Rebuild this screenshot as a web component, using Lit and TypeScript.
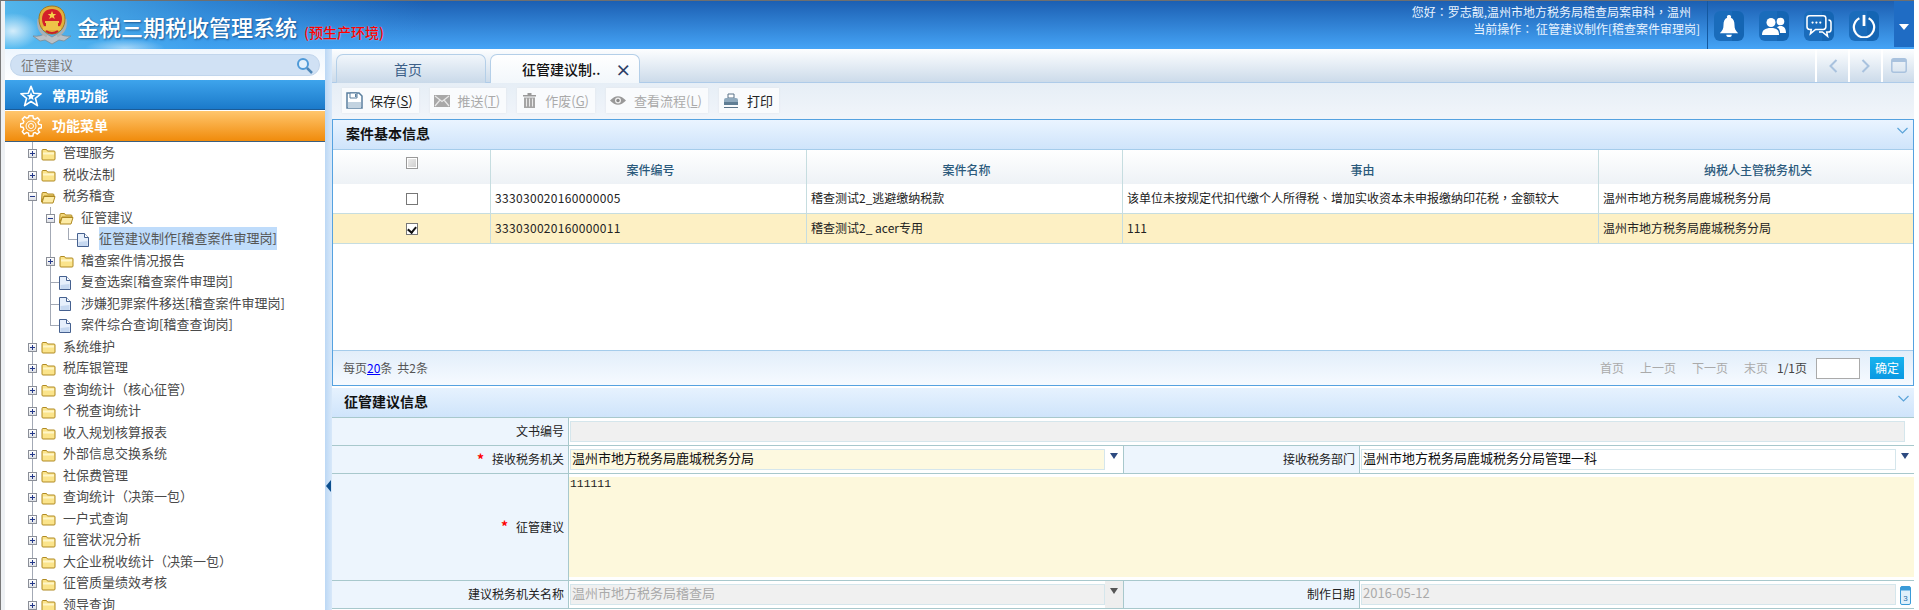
import { LitElement, html, css, svg } from 'lit';
import { customElement } from 'lit/decorators.js';

type Node = { label: string; level: number; kind: 'closed' | 'open' | 'leaf'; last?: boolean; active?: boolean };

const TREE: Node[] = [
	{ label: '管理服务', level: 0, kind: 'closed' },
	{ label: '税收法制', level: 0, kind: 'closed' },
	{ label: '税务稽查', level: 0, kind: 'open' },
	{ label: '征管建议', level: 1, kind: 'open' },
	{ label: '征管建议制作[稽查案件审理岗]', level: 2, kind: 'leaf', last: true, active: true },
	{ label: '稽查案件情况报告', level: 1, kind: 'closed' },
	{ label: '复查选案[稽查案件审理岗]', level: 1, kind: 'leaf' },
	{ label: '涉嫌犯罪案件移送[稽查案件审理岗]', level: 1, kind: 'leaf' },
	{ label: '案件综合查询[稽查查询岗]', level: 1, kind: 'leaf', last: true },
	{ label: '系统维护', level: 0, kind: 'closed' },
	{ label: '税库银管理', level: 0, kind: 'closed' },
	{ label: '查询统计（核心征管）', level: 0, kind: 'closed' },
	{ label: '个税查询统计', level: 0, kind: 'closed' },
	{ label: '收入规划核算报表', level: 0, kind: 'closed' },
	{ label: '外部信息交换系统', level: 0, kind: 'closed' },
	{ label: '社保费管理', level: 0, kind: 'closed' },
	{ label: '查询统计（决策一包）', level: 0, kind: 'closed' },
	{ label: '一户式查询', level: 0, kind: 'closed' },
	{ label: '征管状况分析', level: 0, kind: 'closed' },
	{ label: '大企业税收统计（决策一包）', level: 0, kind: 'closed' },
	{ label: '征管质量绩效考核', level: 0, kind: 'closed' },
	{ label: '领导查询', level: 0, kind: 'closed' },
];

const folderClosed = svg`<svg width="15" height="14" viewBox="0 0 15 14"><path d="M1 3.500q0-1 1-1h3.500l1 1.500h6.500q1 0 1 1v7q0 1-1 1h-11q-1 0-1-1z" fill="#fbe48b" stroke="#b08a22"/><path d="M2 5.500h11v2h-11z" fill="#fff6c8"/></svg>`;
const folderOpen = svg`<svg width="15" height="14" viewBox="0 0 15 14"><path d="M1 3.500q0-1 1-1h3.500l1 1.500h5.500q1 0 1 1v1h-10l-2.500 6z" fill="#f3d77a" stroke="#b08a22"/><path d="M3 6.500h11l-2 6.500h-11z" fill="#fdeca6" stroke="#b08a22"/></svg>`;
const fileIcon = svg`<svg width="12" height="14" viewBox="0 0 12 14"><path d="M.5.500h7l4 4v9h-11z" fill="#e6effb" stroke="#45608f"/><path d="M7.500.5v4h4" fill="#fff" stroke="#45608f"/><path d="M1.500 9l9-1v5h-9z" fill="#c6d8f0"/></svg>`;

@customElement('nav-tree')
export class NavTree extends LitElement {
	static styles = css`
		:host {
			display: block;
			padding-left: 18px;
			font: 13px/20px "Noto Sans CJK TC", "Noto Sans CJK SC", sans-serif;
			color: #4a4a4a;
		}
		.row {
			display: flex;
			height: 21.5px;
			white-space: nowrap;
		}
		.cell {
			width: 18px;
			flex: none;
			position: relative;
		}
		.guide::before {
			content: '';
			position: absolute;
			left: 9px;
			top: 0;
			bottom: 0;
			border-left: 1px solid #a3a9b5;
		}
		.elbow::before {
			content: '';
			position: absolute;
			left: 9px;
			top: 0;
			height: 11px;
			width: 9px;
			border-left: 1px solid #a3a9b5;
			border-bottom: 1px solid #a3a9b5;
		}
		.tee::before {
			content: '';
			position: absolute;
			left: 9px;
			top: 0;
			bottom: 0;
			border-left: 1px solid #a3a9b5;
		}
		.tee::after {
			content: '';
			position: absolute;
			left: 9px;
			top: 11px;
			width: 9px;
			border-top: 1px solid #a3a9b5;
		}
		.box {
			position: absolute;
			left: 5px;
			top: 7px;
			width: 7px;
			height: 7px;
			border: 1px solid #8b8f98;
			background: linear-gradient(#fff, #dde0e6);
		}
		.box::before {
			content: '';
			position: absolute;
			left: 1px;
			right: 1px;
			top: 3px;
			border-top: 1px solid #24398a;
		}
		.box.plus::after {
			content: '';
			position: absolute;
			top: 1px;
			bottom: 1px;
			left: 3px;
			border-left: 1px solid #24398a;
		}
		.icon {
			display: flex;
			align-items: center;
			padding-top: 2px;
			box-sizing: border-box;
			height: 21.5px;
		}
		.label {
			margin-left: 4px;
		}
		.active {
			background: #bfdcfb;
			height: 23px;
			line-height: 22px;
			margin-top: -1px;
			color: #555;
		}
	`;

	render() {
		return TREE.map(
			(n) => html`
				<div class="row">
					${n.level > 0 ? html`<span class="cell guide"></span>` : ''}
					${n.level > 1 ? html`<span class="cell guide"></span>` : ''}
					${n.kind === 'leaf'
						? html`<span class="cell ${n.last ? 'elbow' : 'tee'}"></span>`
						: html`<span class="cell guide"><i class="box ${n.kind === 'closed' ? 'plus' : ''}"></i></span>`}
					<span class="cell icon">
						${n.kind === 'leaf' ? fileIcon : n.kind === 'open' ? folderOpen : folderClosed}
					</span>
					<span class="label ${n.active ? 'active' : ''}">${n.label}</span>
				</div>
			`
		);
	}
}

const emblem = svg`<svg width="40" height="40" viewBox="0 0 40 40">
	<path d="M1 31q8 1 12-3l7 4 7-4q4 4 12 3l-7 5-5-1-7 4-7-4-5 1z" fill="#b9c0c6" stroke="#7d858b" stroke-width=".7"/>
	<path d="M7 14q-2 12 8 17M33 14q2 12-8 17" fill="none" stroke="#a9b0b6" stroke-width="3"/>
	<path d="M20 1c8 0 13 5 13 13s-5 15-13 15-13-7-13-15 5-13 13-13z" fill="#e2b13c" stroke="#a4771d"/>
	<path d="M20 4c6 0 10 4 10 10 0 3-1 5-2 7H12c-1-2-2-4-2-7 0-6 4-10 10-10z" fill="#d3202a"/>
	<path d="M20 6l1.200 3h3l-2.400 2 1 3-2.800-1.800L17.200 14l1-3-2.400-2h3z" fill="#f6d24a"/>
	<path d="M13 16h14v2H13zM14 18h12v4H14zM11 22h18v3H11z" fill="#eec348"/>
	<path d="M14 26q6 4 12 0" fill="none" stroke="#c6202a" stroke-width="2"/>
</svg>`;
const bell = svg`<svg width="22" height="24" viewBox="0 0 24 26"><path d="M12 1a2 2 0 0 1 2 3c3 1 4 4 4 8 0 4 1 6 4 9H2c3-3 4-5 4-9 0-4 1-7 4-8a2 2 0 0 1 2-3z" fill="#fff"/><path d="M9 22.500h6a3 2.500 0 0 1-6 0z" fill="#fff"/></svg>`;
const users = svg`<svg width="24" height="18" viewBox="0 0 24 18"><circle cx="9" cy="5.500" r="4.500" fill="#fff"/><circle cx="18.500" cy="4.500" r="3.800" fill="#fff"/><path d="M0 18c0-5 3-7 9-7s8 2 8 7z" fill="#fff"/><path d="M16 9.500c5-1.500 8 1 8 6.500h-6c0-3-1-5-3-5.500z" fill="#fff"/></svg>`;
const chat = svg`<svg width="26" height="24" viewBox="0 0 30 28" fill="none" stroke="#fff" stroke-width="1.800"><path d="M4 2h16q3 0 3 3v10q0 3-3 3H11l-6 5 1-5H4q-3 0-3-3V5q0-3 3-3z"/><path d="M26 7q3 0 3 3v8q0 3-3 3h-2l1 5-6-5h-4"/><g fill="#fff" stroke="none"><circle cx="7.500" cy="10" r="1.300"/><circle cx="12" cy="10" r="1.300"/><circle cx="16.500" cy="10" r="1.300"/></g></svg>`;
const power = svg`<svg width="24" height="24" viewBox="0 0 26 26" fill="none" stroke="#fff" stroke-width="2.400"><path d="M8 4.500a11 11 0 1 0 10 0"/><path d="M13 1v12" stroke-width="3"/></svg>`;
const star = svg`<svg width="22" height="22" viewBox="0 0 24 24"><path d="M12 1.500l3 7.500 8 .5-6.200 5 2.200 8-7-4.500L5 22.500l2.200-8L1 9.500 9 9z" fill="none" stroke="#fff" stroke-width="1.800" stroke-linejoin="round"/><path d="M12 8l1.300 3 3.200.2-2.500 2 .9 3.200-2.900-1.800-2.900 1.800.9-3.200-2.500-2 3.200-.2z" fill="#fff"/></svg>`;
const gear = svg`<svg width="22" height="22" viewBox="0 0 22 22" fill="none" stroke="#fff"><path stroke-width="1.500" d="M9 1h4l.6 2.800 1.900.8L18 3l2 2.500-1.600 2.400.7 1.900L22 10.500v3l-2.900.7-.7 1.900L20 18l-2.500 2-2-1.600-1.900.7L13 22H9l-.6-2.900-1.900-.7L4 20l-2-2.500 1.600-2.400-.7-1.900L0 12.500v-3l2.900-.7.700-1.900L2 4.500 4.500 2 6.500 3.600l1.900-.8z" transform="scale(.96) translate(.4 -.2)"/><circle cx="11" cy="11" r="5" stroke-width="1"/><circle cx="11" cy="11" r="2.500" stroke-width="1"/></svg>`;
const search = svg`<svg width="17" height="17" viewBox="0 0 17 17"><circle cx="7" cy="7" r="5" fill="#e3f0fb" stroke="#4f9ad8" stroke-width="2"/><path d="M11 11l5 5" stroke="#4f87b8" stroke-width="2.500"/></svg>`;
const saveIcon = svg`<svg width="17" height="17" viewBox="0 0 17 17"><path d="M1 1h12l3 3v12H1z" fill="#fff" stroke="#5a7f9e" stroke-width="1.500"/><path d="M4 1h7v5H4z" fill="#fff" stroke="#5a7f9e"/><path d="M9 2h1.500v3H9z" fill="#5a7f9e"/><path d="M2 10h13v6H2z" fill="#c3d3e0"/></svg>`;
const mailIcon = svg`<svg width="16" height="12" viewBox="0 0 16 12"><path d="M0 0h16v12H0z" fill="#a8a8a8"/><path d="M1 1l7 5.500L15 1M1 11l5-6M15 11l-5-6" fill="none" stroke="#e8e8e8" stroke-width="1.200"/></svg>`;
const trashIcon = svg`<svg width="13" height="15" viewBox="0 0 13 15"><path d="M0 2h13v1.500H0zM4.500 0h4v2h-4z" fill="#999"/><path d="M1 4.500h11V15H1z" fill="#a5a5a5"/><path d="M3.500 5.500v8M6.500 5.500v8M9.500 5.500v8" stroke="#e8e8e8"/></svg>`;
const eyeIcon = svg`<svg width="16" height="11" viewBox="0 0 16 11"><path d="M0 5.500Q8-3 16 5.500 8 14 0 5.500z" fill="#999"/><circle cx="8" cy="5.500" r="3" fill="#eee"/><circle cx="8" cy="5.500" r="1.700" fill="#888"/></svg>`;
const printIcon = svg`<svg width="16" height="16" viewBox="0 0 16 16"><path d="M5 1h6v4H5z" fill="#fff" stroke="#5a7388"/><path d="M1 7q0-2 2-2h10q2 0 2 2v5H1z" fill="#8fa9bd"/><path d="M1 9h14v3H1z" fill="#5f7d94"/><path d="M1 14.500h14" stroke="#5a7388"/></svg>`;
const calendar = svg`<svg width="11" height="20" viewBox="0 0 11 20"><rect x=".5" y="1.500" width="10" height="18" rx="1.500" fill="#dff0fb" stroke="#3a9bd8"/><path d="M1 1.500h9v4H1z" fill="#3a9bd8"/><text x="5.500" y="16" font-size="8" text-anchor="middle" fill="#2a6ea8" font-family="Liberation Sans">3</text></svg>`;
const chevron = svg`<svg class="fold" width="11" height="7" viewBox="0 0 11 7"><path d="M.5 1l5 5 5-5" fill="none" stroke="#5aa3d8" stroke-width="1.200"/></svg>`;

const ROWS = [
	{ no: '333030020160000005', name: '稽查测试2_逃避缴纳税款', why: '该单位未按规定代扣代缴个人所得税、增加实收资本未申报缴纳印花税，金额较大', org: '温州市地方税务局鹿城税务分局', on: false },
	{ no: '333030020160000011', name: '稽查测试2_ acer专用', why: '111', org: '温州市地方税务局鹿城税务分局', on: true },
];

const BUTTONS = [
	{ icon: saveIcon, text: '保存', key: 'S', off: false },
	{ icon: mailIcon, text: '推送', key: 'T', off: true },
	{ icon: trashIcon, text: '作废', key: 'G', off: true },
	{ icon: eyeIcon, text: '查看流程', key: 'L', off: true },
	{ icon: printIcon, text: '打印', key: '', off: false },
];

@customElement('app-root')
export class AppRoot extends LitElement {
	static styles = css`
		:host {
			display: block;
			width: 1919px;
			height: 610px;
			overflow: hidden;
			background: #fff;
			font: 12px/1.4 "Noto Sans CJK SC", sans-serif;
			color: #222;
		}
		.frame {
			width: 1914px;
			height: 610px;
			box-sizing: border-box;
			border-top: 1px solid #6f6f6f;
			border-left: 1px solid #7a7a7a;
			padding-left: 4px;
			background: #eef1f4;
			display: flex;
			flex-direction: column;
			overflow: hidden;
		}
		header {
			height: 48px;
			flex: none;
			display: flex;
			align-items: stretch;
			color: #fff;
			background:
				radial-gradient(ellipse 26px 18px at 8px 30px, rgba(255, 255, 255, .75), transparent),
				radial-gradient(ellipse 40px 9px at 120px 47px, rgba(255, 255, 255, .5), transparent),
				linear-gradient(90deg, rgba(88, 190, 240, .9), rgba(60, 160, 235, .55) 200px, rgba(30, 110, 200, 0) 420px),
				linear-gradient(#1c5fb2, #45a4f6);
		}
		.brand {
			display: flex;
			align-items: center;
			padding-left: 27px;
			flex: 1;
		}
		.brand h1 {
			margin: 1px 0 0 5px;
			font-size: 22px;
			font-weight: 500;
			line-height: 46px;
			text-shadow: 1px 1px 2px rgba(0, 40, 90, .6);
		}
		.brand em {
			margin: 16px 0 0 7px;
			font-style: normal;
			font-size: 14px;
			font-weight: 500;
			color: #f00;
			text-shadow: 0 0 2px rgba(255, 255, 255, .4);
		}
		.who {
			font-family: "Noto Sans CJK TC", "Noto Sans CJK SC", sans-serif;
			text-align: right;
			line-height: 17px;
			padding: 2px 7px 0 0;
			color: #e8f3ff;
		}
		.who div:first-child {
			margin-right: 9px;
		}
		.tools {
			display: flex;
			gap: 15px;
			border-left: 1px solid #14589f;
			padding: 10px 0 0 6px;
		}
		.tile {
			width: 30px;
			height: 30px;
			border-radius: 6px;
			background: linear-gradient(90deg, #1a6cbb 60%, #1465b3 60%);
			display: flex;
			align-items: center;
			justify-content: center;
		}
		.menu {
			margin-left: 15px;
			width: 20px;
			height: 46px;
			background: #1f6cc4;
			display: flex;
			align-items: center;
			justify-content: center;
		}
		.menu i {
			border: 5px solid transparent;
			border-top: 6px solid #fff;
			border-bottom: 0;
			margin-top: 6px;
		}
		.main {
			flex: 1;
			display: flex;
			min-height: 0;
		}
		aside {
			width: 320px;
			flex: none;
			background: #fff;
			overflow: hidden;
		}
		.find {
			height: 31px;
			box-sizing: border-box;
			padding: 5px 5px 0;
			background: linear-gradient(#eef6fe, #fff);
		}
		.find div {
			height: 22px;
			box-sizing: border-box;
			border: 1px solid #c2d6ec;
			border-radius: 11px;
			background: #d0e1f4;
			display: flex;
			align-items: center;
			justify-content: space-between;
			padding: 0 6px 0 10px;
			font-size: 13px;
			color: #777;
		}
		.bar {
			height: 30px;
			display: flex;
			align-items: center;
			gap: 10px;
			padding-left: 15px;
			box-sizing: border-box;
			font-size: 14px;
			font-weight: 700;
			color: #fff;
		}
		.bar.blue {
			background: linear-gradient(#3ea4ec, #1b7aca);
			border-bottom: 1px solid #1b5c98;
			margin-bottom: 1px;
			padding-top: 2px;
		}
		.bar.orange {
			background: linear-gradient(#ffc66d, #f08b0b);
			border-bottom: 1px solid #3a5f80;
			height: 31px;
		}
		.split {
			width: 7px;
			flex: none;
			background: linear-gradient(90deg, #bcd8f5, #d8e8f9);
			padding-top: 431px;
			box-sizing: border-box;
		}
		.split i {
			display: block;
			width: 0;
			border: 6px solid transparent;
			border-right: 5px solid #0d4f8e;
			border-left: 0;
			margin-left: 1px;
		}
		.work {
			width: 1582px;
			flex: none;
			display: flex;
			flex-direction: column;
			background: #fff;
		}
		.tabs {
			height: 34px;
			flex: none;
			box-sizing: border-box;
			display: flex;
			align-items: flex-end;
			gap: 4px;
			padding-left: 4px;
			background: linear-gradient(#fdfeff, #ccdbea);
			border-bottom: 1px solid #aecbe9;
		}
		.tab {
			width: 150px;
			height: 29px;
			box-sizing: border-box;
			margin-bottom: -1px;
			padding-right: 6px;
			border: 1px solid #b4cfe8;
			border-bottom: 0;
			border-radius: 7px 7px 0 0;
			background: linear-gradient(#f1f6fb, #c9d9e9);
			font-size: 14px;
			line-height: 28px;
			text-align: center;
			color: #3c5f88;
		}
		.tab.on {
			background: linear-gradient(#fff, #f2f7fb);
			color: #111;
			font-weight: 500;
			display: flex;
			padding: 0 0 0 31px;
			gap: 15px;
		}
		.tab.on b {
			font-size: 16px;
			color: #2d3f66;
		}
		.pager-nav {
			margin-left: auto;
			display: flex;
			height: 33px;
		}
		.pager-nav span {
			width: 31px;
			border-left: 2px solid #fff;
			display: flex;
			align-items: center;
			justify-content: center;
		}
		.toolbar {
			height: 36px;
			flex: none;
			box-sizing: border-box;
			display: flex;
			gap: 11px;
			padding: 5px 0 0 10px;
			background: linear-gradient(#e6eef6, #f1f5fa);
		}
		.btn {
			height: 25px;
			display: flex;
			align-items: center;
			gap: 6px;
			padding: 0 6px 0 2px;
			background: #f9fbfd;
			box-shadow: 0 0 2px #dfe4e9;
			font-size: 13px;
			line-height: 25px;
			color: #222;
		}
		.btn.off {
			color: #aaa;
		}
		.btn .ico {
			width: 20px;
			display: flex;
			justify-content: center;
		}
		.panel {
			height: 267px;
			flex: none;
			box-sizing: border-box;
			border: 1px solid #55a2e0;
			display: flex;
			flex-direction: column;
			margin-bottom: 2px;
		}
		.head {
			height: 30px;
			flex: none;
			box-sizing: border-box;
			display: flex;
			align-items: center;
			justify-content: space-between;
			padding: 0 5px 2px 13px;
			font-size: 14px;
			font-weight: 700;
			color: #111;
			background: linear-gradient(#eaf4ff, #cfe4fb);
			border-bottom: 1px solid #a5cceb;
		}
		.fold {
			margin-top: -6px;
		}
		.grid {
			display: grid;
			grid-template-columns: 157px 316px 316px 476px 1fr;
		}
		.grid > div {
			border-left: 1px solid #c6dde0;
			padding-left: 4px;
			display: flex;
			align-items: center;
			white-space: nowrap;
			overflow: hidden;
		}
		.grid > div:first-child {
			border-left: 0;
			padding: 0;
			justify-content: center;
		}
		.grid.top {
			height: 34px;
			background: linear-gradient(#fff, #eef2f6);
			font-weight: 500;
			color: #2b5a7c;
		}
		.grid.top > div {
			justify-content: center;
			padding-top: 6px;
		}
		.grid.top > div:first-child {
			align-items: flex-start;
			padding-top: 7px;
		}
		.grid.row {
			height: 30px;
			box-sizing: border-box;
			border-bottom: 1px solid #c6dde0;
			color: #222;
		}
		.grid.row.on {
			background: #fdf0c4;
		}
		.num {
			letter-spacing: .32px;
		}
		.why {
			font-family: "Noto Sans CJK TC", "Noto Sans CJK SC", sans-serif;
		}
		.check {
			width: 12px;
			height: 12px;
			box-sizing: border-box;
			border: 1px solid #777;
			background: #fff;
			display: block;
			position: relative;
		}
		.check.all {
			border-color: #999;
			background: linear-gradient(135deg, #eee, #ccc);
			box-shadow: inset 0 0 0 1px #fff;
		}
		.check.on::after {
			content: '';
			position: absolute;
			left: 2px;
			top: 1px;
			width: 4px;
			height: 6px;
			border: solid #111;
			border-width: 0 2px 2px 0;
			transform: rotate(40deg);
		}
		.spacer {
			flex: 1;
		}
		.foot {
			height: 35px;
			flex: none;
			box-sizing: border-box;
			border-top: 1px solid #a5cceb;
			background: linear-gradient(#e2eefa, #f6faff);
			display: flex;
			align-items: center;
			padding: 0 9px 0 10px;
			color: #555;
		}
		.foot a {
			color: #00f;
			text-decoration: underline;
		}
		.foot .total {
			margin-left: 5px;
		}
		.foot nav {
			margin-left: auto;
			display: flex;
			align-items: center;
			gap: 16px;
			color: #aaa;
		}
		.foot nav .cur {
			color: #444;
			margin-left: -7px;
		}
		.foot nav .jump {
			width: 44px;
			height: 21px;
			box-sizing: border-box;
			border: 1px solid #aaa;
			background: #fff;
			margin-left: -7px;
		}
		.foot nav .go {
			width: 34px;
			height: 22px;
			margin-left: -6px;
			background: linear-gradient(#18b4ee, #0a98e2);
			color: #fff;
			text-align: center;
			line-height: 22px;
		}
		.head.plain {
			height: 29px;
			padding-left: 12px;
			background: linear-gradient(#e6f2fe, #cfe4fb);
			border-bottom: 0;
		}
		.form {
			flex: 1;
			display: grid;
			grid-template-columns: 237px 554px 237px 554px;
			grid-template-rows: 28px 28px 107px 28px;
			align-content: start;
			border-top: 1px solid #a8c8cc;
			background: #fff;
		}
		.form > div {
			box-sizing: border-box;
			border-bottom: 1px solid #a8c8cc;
			display: flex;
			align-items: center;
		}
		.name {
			background: #edf5fd;
			border-right: 1px solid #a8c8cc;
			justify-content: flex-end;
			padding-right: 4px;
			color: #222;
		}
		.name.second {
			border-left: 1px solid #a8c8cc;
		}
		.name i {
			font-style: normal;
			font-size: 14px;
			color: #f00;
			margin-right: 8px;
			font-weight: 700;
		}
		.val {
			padding-left: 1px;
		}
		.val.wide {
			grid-column: span 3;
			padding: 0 9px 0 1px;
		}
		.val.text {
			grid-column: span 3;
			padding: 3px 0 3px;
			align-items: stretch;
		}
		.field {
			flex: 1;
			height: 21px;
			box-sizing: border-box;
			border: 1px solid #d5e6ec;
			padding-left: 1px;
			font-size: 13px;
			line-height: 16px;
			color: #111;
			white-space: nowrap;
			overflow: hidden;
			min-width: 0;
		}
		.field.grey {
			background: #f0f0f0;
			color: #aaa;
		}
		.field.must {
			background: #fdf9e0;
		}
		.memo {
			flex: 1;
			background: #fdf8dc;
			font: 11.400px/14px "Liberation Mono", monospace;
			color: #222;
			padding: 0 0 0 1px;
		}
		.drop {
			width: 18px;
			flex: none;
			display: flex;
			justify-content: center;
			align-self: stretch;
			align-items: center;
		}
		.drop i {
			border: 4.500px solid transparent;
			border-top: 6px solid #2d4a80;
			border-bottom: 0;
			margin-top: -7px;
		}
		.drop.dim {
			background: #eee;
		}
		.drop.dim i {
			border-top-color: #555;
		}
	`;

	render() {
		return html`
			<div class="frame">
				<header>
					<div class="brand">
						${emblem}
						<h1>金税三期税收管理系统</h1>
						<em>(预生产环境)</em>
					</div>
					<div class="who">
						<div>您好：罗志靓,温州市地方税务局稽查局案审科，温州</div>
						<div>当前操作： 征管建议制作[稽查案件审理岗]</div>
					</div>
					<div class="tools">
						<span class="tile">${bell}</span>
						<span class="tile">${users}</span>
						<span class="tile">${chat}</span>
						<span class="tile">${power}</span>
					</div>
					<div class="menu"><i></i></div>
				</header>
				<div class="main">
					<aside>
						<div class="find"><div>征管建议 ${search}</div></div>
						<div class="bar blue">${star} 常用功能</div>
						<div class="bar orange">${gear} 功能菜单</div>
						<nav-tree></nav-tree>
					</aside>
					<div class="split"><i></i></div>
					<div class="work">
						<div class="tabs">
							<div class="tab">首页</div>
							<div class="tab on">征管建议制.. <b>×</b></div>
							<div class="pager-nav">
								<span><svg width="12" height="16" viewBox="0 0 12 16"><path d="M9.500 2l-6 6 6 6" fill="none" stroke="#a9c2de" stroke-width="2"/></svg></span>
								<span><svg width="12" height="16" viewBox="0 0 12 16"><path d="M2.500 2l6 6-6 6" fill="none" stroke="#a9c2de" stroke-width="2"/></svg></span>
								<span><svg width="16" height="15" viewBox="0 0 16 15"><rect x=".8" y=".8" width="14.400" height="13.400" rx="2" fill="none" stroke="#a9c2de" stroke-width="1.500"/><path d="M1 1h14v3H1z" fill="#a9c2de"/></svg></span>
							</div>
						</div>
						<div class="toolbar">
							${BUTTONS.map(
								(b) => html`<div class="btn ${b.off ? 'off' : ''}">
									<span class="ico">${b.icon}</span>
									<span>${b.text}${b.key ? html`(<u>${b.key}</u>)` : ''}</span>
								</div>`
							)}
						</div>
						<section class="panel">
							<div class="head">案件基本信息 ${chevron}</div>
							<div class="grid top">
								<div><span class="check all"></span></div>
								<div>案件编号</div>
								<div>案件名称</div>
								<div>事由</div>
								<div>纳税人主管税务机关</div>
							</div>
							${ROWS.map(
								(r) => html`<div class="grid row ${r.on ? 'on' : ''}">
									<div><span class="check ${r.on ? 'on' : ''}"></span></div>
									<div class="num">${r.no}</div>
									<div>${r.name}</div>
									<div class="why">${r.why}</div>
									<div>${r.org}</div>
								</div>`
							)}
							<div class="spacer"></div>
							<div class="foot">
								<span>每页<a>20</a>条</span>
								<span class="total">共2条</span>
								<nav>
									<span>首页</span>
									<span>上一页</span>
									<span>下一页</span>
									<span>末页</span>
									<span class="cur">1/1页</span>
									<span class="jump"></span>
									<span class="go">确定</span>
								</nav>
							</div>
						</section>
						<div class="head plain">征管建议信息 ${chevron}</div>
						<div class="form">
							<div class="name">文书编号</div>
							<div class="val wide"><div class="field grey"></div></div>

							<div class="name"><i>*</i>接收税务机关</div>
							<div class="val">
								<div class="field must">温州市地方税务局鹿城税务分局</div>
								<span class="drop"><i></i></span>
							</div>
							<div class="name second">接收税务部门</div>
							<div class="val">
								<div class="field">温州市地方税务局鹿城税务分局管理一科</div>
								<span class="drop"><i></i></span>
							</div>

							<div class="name"><i>*</i>征管建议</div>
							<div class="val text"><div class="memo">111111</div></div>

							<div class="name">建议税务机关名称</div>
							<div class="val">
								<div class="field grey">温州市地方税务局稽查局</div>
								<span class="drop dim"><i></i></span>
							</div>
							<div class="name second">制作日期</div>
							<div class="val">
								<div class="field grey">2016-05-12</div>
								<span class="drop">${calendar}</span>
							</div>
						</div>
					</div>
				</div>
			</div>
		`;
	}
}
